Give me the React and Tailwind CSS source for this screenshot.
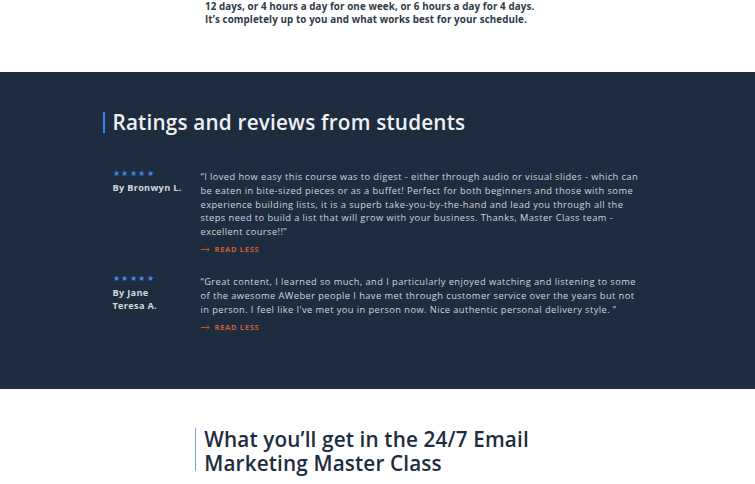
import React from 'react';

const reviews = [
  {
    name: 'By Bronwyn L.',
    text: '“I loved how easy this course was to digest - either through audio or visual slides - which can be eaten in bite-sized pieces or as a buffet! Perfect for both beginners and those with some experience building lists, it is a superb take-you-by-the-hand and lead you through all the steps need to build a list that will grow with your business. Thanks, Master Class team - excellent course!!”',
  },
  {
    name: 'By Jane Teresa A.',
    text: '“Great content, I learned so much, and I particularly enjoyed watching and listening to some of the awesome AWeber people I have met through customer service over the years but not in person. I feel like I\'ve met you in person now. Nice authentic personal delivery style. ”',
  },
];

const Stars = () => (
  <div className="flex gap-[1.5px] text-[#3f86f0] text-[8px] leading-none">
    {[0, 1, 2, 3, 4].map((i) => (
      <span key={i}>★</span>
    ))}
  </div>
);

const Arrow = () => (
  <svg width="9" height="5" viewBox="0 0 9 5" fill="none" stroke="currentColor" strokeWidth="0.9">
    <path d="M0 2.5H8.2M6.4 0.8L8.2 2.5L6.4 4.2" />
  </svg>
);

export default function App() {
  return (
    <div className="w-[755px] h-[484px] overflow-hidden bg-white font-['Open_Sans',sans-serif]">
      <div className="h-[72px] overflow-hidden">
        <div className="w-[365px] mx-auto pl-[10px] text-[9.8px] font-bold leading-[13px] text-[#2f3a48] tracking-[0.1px] whitespace-nowrap">
          <p>12 days, or 4 hours a day for one week, or 6 hours a day for 4 days.</p>
          <p>It’s completely up to you and what works best for your schedule.</p>
        </div>
      </div>

      <div className="bg-[#1d2c3e] h-[317px] pt-[37px]">
        <div className="w-[550px] mx-auto">
          <div className="flex items-center gap-[8px]">
            <div className="w-[2px] h-[21px] bg-[#3d7fe6]" />
            <h2 className="text-[20.7px] leading-[26px] font-semibold text-[#eef1f4] tracking-[0.2px]">
              Ratings and reviews from students
            </h2>
          </div>

          <div className="mt-[34px] pl-[10px] flex flex-col gap-[19px]">
            {reviews.map((r) => (
              <div key={r.name} className="flex">
                <div className="w-[88px] shrink-0">
                  <Stars />
                  <div className="mt-[4px] w-[70px] text-[9.2px] font-bold leading-[13px] text-[#d3d8de] tracking-[0.3px]">
                    {r.name}
                  </div>
                </div>
                <div className="w-[440px] pt-[1px]">
                  <p className="text-[9.3px] leading-[13.8px] text-[#d2d6dc] tracking-[0.42px]">{r.text}</p>
                  <div className="mt-[5px] flex items-center gap-[5px] text-[#cf5a3a] text-[7.5px] font-bold tracking-[0.7px]">
                    <Arrow />
                    <span>READ LESS</span>
                  </div>
                </div>
              </div>
            ))}
          </div>
        </div>
      </div>

      <div className="w-[365px] mx-auto pt-[38px]">
        <div className="flex gap-[8px]">
          <div className="w-[2px] h-[43px] mt-[1px] bg-[#6f9ff0]" />
          <h2 className="text-[20.7px] leading-[24px] text-[#1d2c3e] font-semibold tracking-[0.15px]">
            What you’ll get in the 24/7 Email Marketing Master Class
          </h2>
        </div>
      </div>
    </div>
  );
}
